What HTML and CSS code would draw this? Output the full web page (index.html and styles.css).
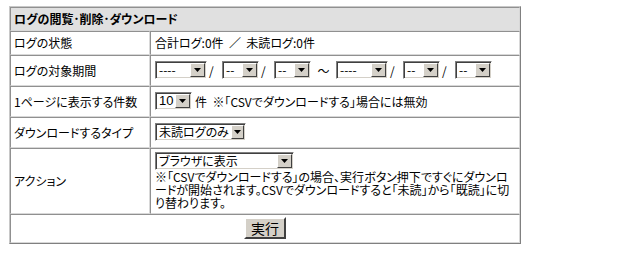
FILE: index.html
```html
<!DOCTYPE html>
<html>
<head>
    <meta charset="UTF-8">
    <title>ログの閲覧･削除･ダウンロード</title>
    <link rel="stylesheet" href="styles.css">
</head>
<body>
<table class="log-table">
    <tr>
        <th colspan="2" class="head">ログの閲覧･削除･ダウンロード</th>
    </tr>
    <tr>
        <td class="label">ログの状態</td>
        <td class="value">合計ログ:0件&nbsp;&nbsp;／&nbsp;&nbsp;未読ログ:0件</td>
    </tr>
    <tr>
        <td class="label">ログの対象期間</td>
        <td class="value ctl">
            <span class="sel w-year"><span class="val">----</span><span class="btn"><svg width="7" height="4" viewBox="0 0 7 4"><path d="M0 0h7L3.5 4z"/></svg></span></span><span class="sep">/</span><span class="sel w-small"><span class="val">--</span><span class="btn"><svg width="7" height="4" viewBox="0 0 7 4"><path d="M0 0h7L3.5 4z"/></svg></span></span><span class="sep">/</span><span class="sel w-small"><span class="val">--</span><span class="btn"><svg width="7" height="4" viewBox="0 0 7 4"><path d="M0 0h7L3.5 4z"/></svg></span></span><span class="tilde">～</span><span class="sel w-year"><span class="val">----</span><span class="btn"><svg width="7" height="4" viewBox="0 0 7 4"><path d="M0 0h7L3.5 4z"/></svg></span></span><span class="sep">/</span><span class="sel w-small"><span class="val">--</span><span class="btn"><svg width="7" height="4" viewBox="0 0 7 4"><path d="M0 0h7L3.5 4z"/></svg></span></span><span class="sep">/</span><span class="sel w-small"><span class="val">--</span><span class="btn"><svg width="7" height="4" viewBox="0 0 7 4"><path d="M0 0h7L3.5 4z"/></svg></span></span>
        </td>
    </tr>
    <tr>
        <td class="label">1ページに表示する件数</td>
        <td class="value ctl">
            <span class="sel w-small"><span class="val num">10</span><span class="btn"><svg width="7" height="4" viewBox="0 0 7 4"><path d="M0 0h7L3.5 4z"/></svg></span></span><span class="after">件&nbsp;&nbsp;※「CSVでダウンロードする」場合には無効</span>
        </td>
    </tr>
    <tr>
        <td class="label">ダウンロードするタイプ</td>
        <td class="value ctl">
            <span class="sel w-type"><span class="val">未読ログのみ</span><span class="btn"><svg width="7" height="4" viewBox="0 0 7 4"><path d="M0 0h7L3.5 4z"/></svg></span></span>
        </td>
    </tr>
    <tr>
        <td class="label">アクション</td>
        <td class="value action">
            <span class="sel w-action"><span class="val">ブラウザに表示</span><span class="btn"><svg width="7" height="4" viewBox="0 0 7 4"><path d="M0 0h7L3.5 4z"/></svg></span></span>
            <p class="note">※「CSVでダウンロードする」の場合、実行ボタン押下ですぐにダウンロ<br>ードが開始されます。CSVでダウンロードすると「未読」から「既読」に切<br>り替わります。</p>
        </td>
    </tr>
    <tr>
        <td colspan="2" class="submit"><button class="run">実行</button></td>
    </tr>
</table>
</body>
</html>
```

FILE: styles.css
```css
body {
    margin: 6px 9px;
    background: #fff;
    font: 12px/13px "Noto Sans CJK JP", sans-serif;
    font-feature-settings: "palt";
    color: #000;
}
.log-table {
    width: 512px;
    border-collapse: separate;
    border-spacing: 0;
    border: 1px solid;
    border-color: #c8c8c8 #808080 #808080 #c8c8c8;
}
.log-table th,
.log-table td {
    border: 1px solid;
    border-color: #909090 #d8d8d8 #d8d8d8 #909090;
    padding: 4px 3px 5px;
    text-align: left;
    vertical-align: middle;
}
.log-table .head {
    background-color: #e0e0e0;
    font-weight: bold;
    padding: 4px 3px 5px;
}
.log-table .label {
    width: 132px;
    white-space: nowrap;
}
.log-table .value {
    padding-left: 4px;
}
.log-table .ctl {
    padding-top: 5px;
    padding-bottom: 6px;
}
.sel {
    display: inline-flex;
    vertical-align: middle;
    box-sizing: border-box;
    height: 18px;
    background: #fff;
    border: 1px solid;
    border-color: #808080 #fff #fff #808080;
    box-shadow: inset 1px 1px 0 #404040, inset -1px -1px 0 #d4d0c8;
    padding: 1px;
}
.val {
    flex: 1;
    padding: 0 2px;
    line-height: 14px;
    white-space: nowrap;
}
.num {
    font-family: "Liberation Sans", sans-serif;
    font-size: 13px;
}
.btn {
    width: 15px;
    box-sizing: border-box;
    background: #d4d0c8;
    border: 1px solid;
    border-color: #fff #404040 #404040 #fff;
    display: flex;
    align-items: center;
    justify-content: center;
}
.btn svg {
    display: block;
}
.w-year {
    width: 52px;
}
.w-small {
    width: 37px;
}
.w-type {
    width: 91px;
}
.w-action {
    width: 139px;
}
.sep {
    display: inline-block;
    width: 13px;
    padding-left: 2px;
    vertical-align: middle;
}
.tilde {
    display: inline-block;
    width: 25px;
    text-align: center;
    vertical-align: middle;
}
.after {
    vertical-align: middle;
    margin-left: 3px;
}
.log-table .action {
    padding-top: 3px;
    padding-bottom: 4px;
}
.note {
    margin: 0;
    line-height: 13px;
}
.log-table .submit {
    text-align: center;
    padding: 2px 3px 3px;
}
.run {
    font: 14px/15px "Noto Sans CJK JP", sans-serif;
    background: #d4d0c8;
    color: #000;
    border: 2px solid;
    border-color: #fff #404040 #404040 #fff;
    padding: 1px 5px;
    height: 22px;
}
```
